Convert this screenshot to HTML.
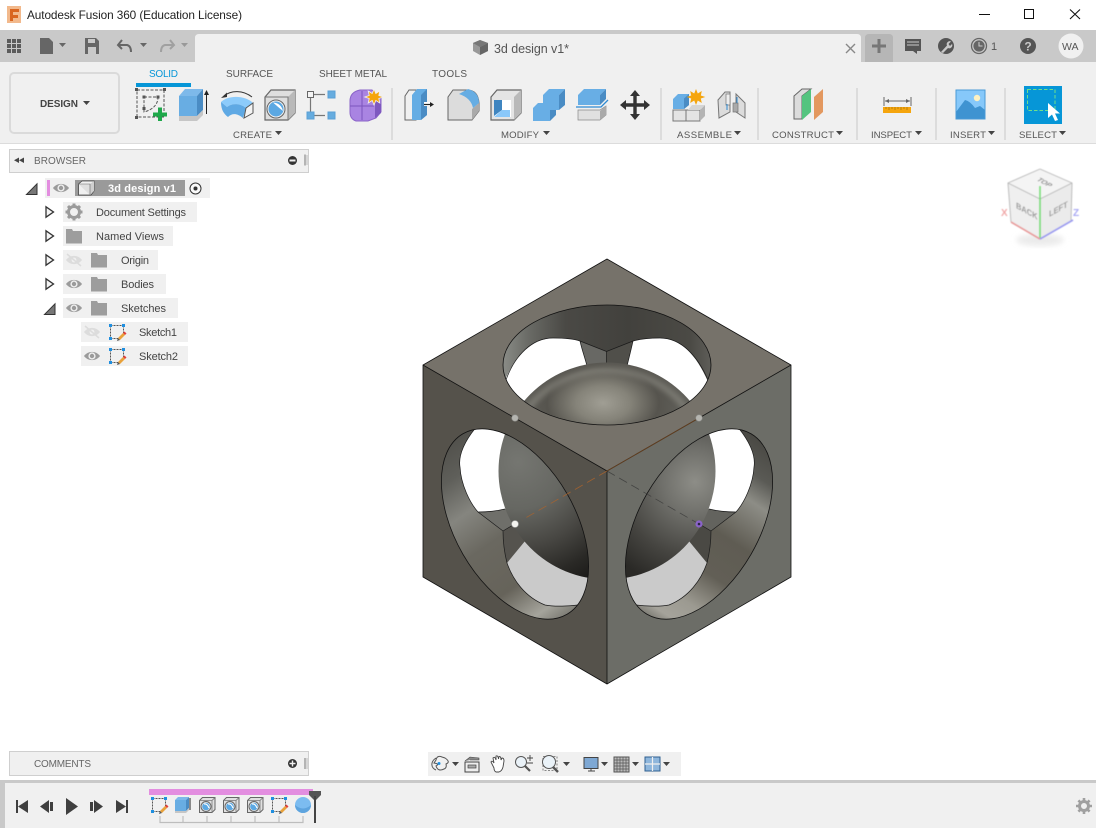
<!DOCTYPE html>
<html><head><meta charset="utf-8"><title>Autodesk Fusion 360</title>
<style>
html,body{margin:0;padding:0;background:#fff;width:1096px;height:828px;overflow:hidden}
svg{display:block;position:absolute;left:0;top:0}
text{font-family:"Liberation Sans",Arial,sans-serif;fill:#555;font-size:10px}
.r{font-size:11px;fill:#444}
.ne{vector-effect:non-scaling-stroke}
</style></head><body>
<svg width="1096" height="828" viewBox="0 0 1096 828" xmlns="http://www.w3.org/2000/svg">
<defs>
<path id="caret" d="M0,0h7l-3.500,4z"/>
<g id="eye"><path d="M-8,0C-4,-5.500 4,-5.500 8,0C4,5.500 -4,5.500 -8,0Z" fill="#9b9b9b"/><circle r="3.600" fill="#f0f0f0"/><circle r="2.200" fill="#9b9b9b"/></g>
<g id="eyeoff"><path d="M-8,0C-4,-5.500 4,-5.500 8,0C4,5.500 -4,5.500 -8,0Z" fill="#dcdcdc"/><circle r="2.400" fill="#f0f0f0"/><path d="M-7,-6L7,6" stroke="#dcdcdc" stroke-width="1.500"/></g>
<path id="folder" d="M0,0h6l1,2h9v12.500h-16z" fill="#9d9d9d"/>
<path id="tri" d="M1,0.800L8.500,6L1,11.200Z" fill="#f4f4f4" stroke="#333" stroke-width="1.300"/>
<g id="open"><path d="M0.500,11.500H11V0.800Z" fill="#777" stroke="#333" stroke-width="1"/></g>
<g id="sk"><path d="M1.500,1.500H14.500M1.500,1.500V14.500M1.500,14.500H9M14.500,1.500V9" fill="none" stroke="#555" stroke-width="1" stroke-dasharray="2 1"/><rect width="3" height="3" fill="#1f8fe0"/><rect x="13" width="3" height="3" fill="#1f8fe0"/><rect y="13" width="3" height="3" fill="#1f8fe0"/><path d="M9,14L14,9L16,11L11,16Z" fill="#e9a23b"/><path d="M14,9L15.500,7.500L17.500,9.500L16,11Z" fill="#e2403a"/><path d="M9,14L8,17L11,16Z" fill="#555"/></g>
<g id="holemini"><path d="M0.500,3.500L3.500,0.500H16L16,12.500L13,15.500H0.500Z" fill="#e0e0e0" stroke="#666"/><path d="M13,3.500H.5M13,3.500V15.500M13,3.500L16,.5" fill="none" stroke="#777" stroke-width=".8"/><circle cx="7" cy="9.500" r="5" fill="#e8e8e8" stroke="#666"/><circle cx="7" cy="9.500" r="3.800" fill="#5ba8e3"/><path d="M5,7C7,6.500 9,8 10,11" stroke="#fff" stroke-width="1.200" fill="none"/></g>

<clipPath id="cT"><ellipse cx="607" cy="365" rx="104" ry="60"/></clipPath>
<clipPath id="cL"><circle r=".8" transform="matrix(92,53,0,106.500,515,524)"/></clipPath>
<clipPath id="cR"><circle r=".8" transform="matrix(92,-53,0,106.500,699,524)"/></clipPath>
<clipPath id="cS"><circle cx="607" cy="471" r="108.500"/></clipPath>
<mask id="mT" maskUnits="userSpaceOnUse" x="400" y="240" width="420" height="460"><rect x="400" y="240" width="420" height="460" fill="#fff"/><ellipse cx="607" cy="365" rx="104" ry="60" fill="#000"/></mask>
<mask id="mL" maskUnits="userSpaceOnUse" x="400" y="240" width="420" height="460"><rect x="400" y="240" width="420" height="460" fill="#fff"/><circle r=".8" transform="matrix(92,53,0,106.500,515,524)" fill="#000"/></mask>
<mask id="mR" maskUnits="userSpaceOnUse" x="400" y="240" width="420" height="460"><rect x="400" y="240" width="420" height="460" fill="#fff"/><circle r=".8" transform="matrix(92,-53,0,106.500,699,524)" fill="#000"/></mask>
<linearGradient id="wT" gradientUnits="userSpaceOnUse" x1="503" y1="0" x2="711" y2="0"><stop offset="0" stop-color="#8a8c87"/><stop offset=".12" stop-color="#6a6b66"/><stop offset=".3" stop-color="#4a4945"/><stop offset=".6" stop-color="#42413d"/><stop offset=".9" stop-color="#4b4a45"/><stop offset="1" stop-color="#5e5d58"/></linearGradient>
<linearGradient id="wL" gradientUnits="userSpaceOnUse" x1="442" y1="440" x2="570" y2="625"><stop offset="0" stop-color="#4f4e49"/><stop offset=".17" stop-color="#5f5f5a"/><stop offset=".33" stop-color="#85857f"/><stop offset=".5" stop-color="#6a6860"/><stop offset=".72" stop-color="#66635a"/><stop offset=".88" stop-color="#a5a49c"/><stop offset="1" stop-color="#66655e"/></linearGradient>
<linearGradient id="wR" gradientUnits="userSpaceOnUse" x1="770" y1="440" x2="650" y2="625"><stop offset="0" stop-color="#474641"/><stop offset=".17" stop-color="#5a5a55"/><stop offset=".28" stop-color="#8d8d86"/><stop offset=".48" stop-color="#5f5c53"/><stop offset=".66" stop-color="#625f56"/><stop offset=".82" stop-color="#9c9a91"/><stop offset=".92" stop-color="#a5a39b"/><stop offset="1" stop-color="#66655e"/></linearGradient>
<radialGradient id="sT" gradientUnits="userSpaceOnUse" cx="603" cy="403" r="62" gradientTransform="matrix(1.250 0 0 .8 -150.700 80.600)"><stop offset="0" stop-color="#a09e94"/><stop offset=".35" stop-color="#858379"/><stop offset=".72" stop-color="#56544e"/><stop offset="1" stop-color="#5f5e58"/></radialGradient>
<radialGradient id="sL" gradientUnits="userSpaceOnUse" cx="518" cy="462" r="135"><stop offset="0" stop-color="#757671"/><stop offset=".35" stop-color="#666762"/><stop offset=".62" stop-color="#484743"/><stop offset=".85" stop-color="#2a2926"/><stop offset="1" stop-color="#1c1b19"/></radialGradient>
<radialGradient id="sR" gradientUnits="userSpaceOnUse" cx="695" cy="482" r="108"><stop offset="0" stop-color="#8d8d87"/><stop offset=".3" stop-color="#70706b"/><stop offset=".7" stop-color="#454440"/><stop offset="1" stop-color="#2a2926"/></radialGradient>
<filter id="bl" x="-20%" y="-20%" width="140%" height="140%"><feGaussianBlur stdDeviation="3"/></filter>
<filter id="b4" x="-10%" y="-10%" width="120%" height="120%"><feGaussianBlur stdDeviation=".5"/></filter>
</defs>

<rect width="1096" height="828" fill="#fff"/>

<!-- title bar -->
<rect x="7" y="6" width="14" height="17" fill="#f2b98c"/><path d="M10,9h9v3h-6v3h5v3h-5v3h-3z" fill="#d9651f"/>
<text x="27" y="19" style="font-size:11.800px;fill:#222" textLength="215">Autodesk Fusion 360 (Education License)</text>
<path d="M979,14.500H990" stroke="#111"/><rect x="1024.500" y="9.500" width="9" height="9" fill="none" stroke="#111"/><path d="M1070,9.500L1080,19M1080,9.500L1070,19" stroke="#111" stroke-width="1.100"/>

<!-- top gray bar -->
<rect y="30" width="1096" height="32" fill="#c9c9c9"/>
<rect y="62" width="1096" height="81" fill="#f0f0f0"/>
<rect y="143" width="1096" height="1" fill="#dcdcdc"/>
<path d="M195,62V38q0,-4 4,-4H857q4,0 4,4V62Z" fill="#f0f0f0"/>
<path d="M865,62V38q0,-4 4,-4H889q4,0 4,4V62Z" fill="#b6b6b6"/>
<path d="M879,39v14M872,46h14" stroke="#777" stroke-width="3"/>
<g fill="#5c5c5c"><rect x="7" y="39" width="4" height="4"/><rect x="12" y="39" width="4" height="4"/><rect x="17" y="39" width="4" height="4"/><rect x="7" y="44" width="4" height="4"/><rect x="12" y="44" width="4" height="4"/><rect x="17" y="44" width="4" height="4"/><rect x="7" y="49" width="4" height="4"/><rect x="12" y="49" width="4" height="4"/><rect x="17" y="49" width="4" height="4"/></g>
<path d="M40,38h9l4,4v12h-13z" fill="#666"/><use href="#caret" x="59" y="43" fill="#666"/>
<path d="M85,38h11l3,3v13h-14z" fill="#666"/><rect x="88" y="39" width="7" height="4" fill="#c9c9c9"/><rect x="88" y="47" width="8" height="7" fill="#c9c9c9"/>
<path d="M122,40L118,45L122,49M118,45H127Q131,46 131,52" fill="none" stroke="#666" stroke-width="2"/><use href="#caret" x="140" y="43" fill="#666"/>
<path d="M170,40L174,45L170,49M174,45H165Q161,46 161,52" fill="none" stroke="#a0a0a0" stroke-width="2"/><use href="#caret" x="181" y="43" fill="#999"/>
<path d="M473,43L480,40L488,43V51L480,55L473,51Z" fill="#999"/><path d="M480,47L488,43V51L480,55Z" fill="#666"/><path d="M473,43L480,40L488,43L480,47Z" fill="#777"/>
<text x="494" y="53" style="font-size:12.500px;fill:#555" textLength="75">3d design v1*</text>
<path d="M846,44L855,53M855,44L846,53" stroke="#888" stroke-width="1.400"/>
<path d="M905,39h16v12h-4v3l-4,-3h-8z" fill="#555"/><path d="M907,42h12M907,45h12" stroke="#c9c9c9"/>
<circle cx="946" cy="46" r="8" fill="#555"/><path d="M941,52L947,45.500A3,3 0 0 1 951,41.500L948.500,44L950,46L952,44A3,3 0 0 1 948,48L943,53Z" fill="#c9c9c9"/>
<circle cx="979" cy="46" r="7.500" fill="none" stroke="#666" stroke-width="1.300"/><circle cx="979" cy="46" r="5.600" fill="#666"/><path d="M979,42v4h3.500" fill="none" stroke="#ccc" stroke-width="1"/>
<text x="991" y="50" style="font-size:11px;fill:#555">1</text>
<circle cx="1028" cy="46" r="8" fill="#555"/><text x="1024.400" y="50.500" style="font-size:12px;font-weight:bold;fill:#c9c9c9">?</text>
<circle cx="1071" cy="46" r="12.500" fill="#f0f0f0"/><text x="1062" y="50" style="font-size:10.500px;fill:#555">WA</text>

<!-- design button -->
<rect x="10" y="73" width="109" height="60" rx="4" fill="#f0f0f0" stroke="#dadada" stroke-width="2"/>
<text x="40" y="107" style="font-weight:bold;font-size:10px;fill:#444" textLength="38">DESIGN</text>
<use href="#caret" x="83" y="101" fill="#444"/>

<!-- ribbon tabs -->
<text x="149" y="77" style="fill:#0696d7" textLength="29">SOLID</text>
<text x="226" y="77" textLength="47">SURFACE</text>
<text x="319" y="77" textLength="68">SHEET METAL</text>
<text x="432" y="77" textLength="35">TOOLS</text>
<rect x="136" y="83" width="55" height="4" fill="#0696d7"/>

<g fill="#dcdcdc"><rect x="391" y="88" width="2" height="52"/><rect x="660" y="88" width="2" height="52"/><rect x="757" y="88" width="2" height="52"/><rect x="856" y="88" width="2" height="52"/><rect x="935" y="88" width="2" height="52"/><rect x="1004" y="88" width="2" height="52"/></g>

<!-- labels -->
<g style="font-size:9.600px">
<text x="233" y="138" style="font-size:9.600px" textLength="39">CREATE</text><use href="#caret" x="275" y="131" fill="#444"/>
<text x="501" y="138" style="font-size:9.600px" textLength="38">MODIFY</text><use href="#caret" x="543" y="131" fill="#444"/>
<text x="677" y="138" style="font-size:9.600px" textLength="55">ASSEMBLE</text><use href="#caret" x="734" y="131" fill="#444"/>
<text x="772" y="138" style="font-size:9.600px" textLength="62">CONSTRUCT</text><use href="#caret" x="836" y="131" fill="#444"/>
<text x="871" y="138" style="font-size:9.600px" textLength="41">INSPECT</text><use href="#caret" x="915" y="131" fill="#444"/>
<text x="950" y="138" style="font-size:9.600px" textLength="36">INSERT</text><use href="#caret" x="988" y="131" fill="#444"/>
<text x="1019" y="138" style="font-size:9.600px" textLength="38">SELECT</text><use href="#caret" x="1059" y="131" fill="#444"/>
</g>

<!-- CREATE icons -->
<g>
<path d="M137,90H164V117H137Z" fill="none" stroke="#555" stroke-dasharray="3 1.500"/>
<path d="M144,97H158Q158,108 144,112Z" fill="none" stroke="#555" stroke-dasharray="3 1.500"/>
<g fill="#555"><rect x="135" y="88" width="3" height="3"/><rect x="163" y="88" width="3" height="3"/><rect x="135" y="116" width="3" height="3"/><rect x="142.500" y="95.500" width="3" height="3"/><rect x="156.500" y="95.500" width="3" height="3"/><rect x="142.500" y="107" width="3" height="3"/></g>
<path d="M160,107.500v13.500M153,114.500h14" stroke="#1ea84a" stroke-width="4"/>

<path d="M179,96L185,89H203L197,96Z" fill="#7db9ea"/><rect x="179" y="96" width="18" height="20" fill="#68ade3"/><path d="M197,96L203,89V110L197,116Z" fill="#4a8cc4"/>
<path d="M179,116H197L203,110V115L197,121H179Z" fill="#c6c6c6"/>
<path d="M206.500,114V93" stroke="#222" stroke-width="1"/><path d="M204,95L206.500,90L209,95Z" fill="#222"/>

<path d="M221,102C228,95 245,95 253,103L246,108C240,103 232,103 227,107Z" fill="#8ccbfb"/>
<path d="M221,102L227,107C232,103 240,103 246,108L243,118C237,113 232,113 228,117C224,114 221,110 221,102Z" fill="#5fa9e4"/>
<path d="M246,108L253,103V113L244,118Z" fill="#f4f4f4" stroke="#555"/>
<path d="M224,96C231,90 243,90 252,97" fill="none" stroke="#333" stroke-width="1"/><path d="M221,98L227,92.500V97Z" fill="#333"/>

<path d="M265,97L271,90H295V113L288,120H265Z" fill="#dedede" stroke="#666" stroke-width="1.200"/><path d="M288,97L295,90V113L288,120Z" fill="#b9b9b9"/><path d="M265,97H288V120" fill="none" stroke="#777"/>
<circle cx="276" cy="109" r="9" fill="#eee" stroke="#666"/><circle cx="276" cy="109" r="7.500" fill="#5ba8e3"/><path d="M273,102.500Q281,103 283,111Q278,107 273,102.500Z" fill="#fff"/>

<path d="M313,94.500H325M313,115.500H325M310.500,98V112" stroke="#777" stroke-width="1.200"/>
<rect x="307.500" y="91.500" width="6" height="6" fill="#f4f4f4" stroke="#666"/>
<rect x="328" y="91" width="7" height="7" fill="#66acdf" stroke="#5a9fd6"/><rect x="307" y="112" width="7" height="7" fill="#66acdf" stroke="#5a9fd6"/><rect x="328" y="112" width="7" height="7" fill="#66acdf" stroke="#5a9fd6"/>

<path d="M350,101Q350,92 360,90H372L381,98V112L376,118L368,121H356Q350,119 350,112Z" fill="#a984e2" stroke="#8a63c8"/>
<path d="M350,106H374M362,91V120" stroke="#7c55bd" stroke-width="1"/><path d="M375,100L381,103V113L375,118Z" fill="#7e58bf"/>
<path d="M374,89l1.800,4.500 4,-2.500-1,4.500 4.500,1.500-4.500,1.500 1,4.500-4,-2.500-1.800,4.500-1.800,-4.500-4,2.500 1,-4.500-4.500,-1.500 4.500,-1.500-1,-4.500 4,2.500z" fill="#f5a50d" stroke="#f0f0f0" stroke-width=".8"/>
</g>

<!-- MODIFY icons -->
<g>
<path d="M405,120V96L409,90H416V120Z" fill="#f0f0f0" stroke="#666"/>
<path d="M412,95L417,89H427V115L421,120H412Z" fill="#65ade4"/><path d="M421,95L427,89V115L421,120Z" fill="#4a8cc4"/>
<path d="M424,102h7v4h-7z" fill="#fff"/><path d="M424,104.500H431" stroke="#222" stroke-width="1.200"/><path d="M430,102L434,104.500L430,107Z" fill="#222"/>

<path d="M448,97L453,90H467Q478,90 479,103V111L472,120H448Z" fill="#dcdcdc" stroke="#666"/>
<path d="M472,120V109L479,103V111Z" fill="#aaa"/>
<path d="M459,94L468,89Q479,92 479,103L473,108Q471,98 459,94Z" fill="#66ade3"/>

<path d="M491,97L497,90H521V113L514,120H491Z" fill="#e4e4e4" stroke="#666" stroke-width="1.200"/><path d="M514,97L521,90V113L514,120Z" fill="#b9b9b9"/>
<rect x="494" y="100" width="17" height="17" fill="#fff"/>
<path d="M494,100h8v10l-8,6Z" fill="#3f85c0"/><path d="M494,117L502,110H510V117Z" fill="#8ac8fa"/>

<path d="M533,108L538,103H545V108Z" fill="#68aee5"/><rect x="533" y="108" width="17" height="13" fill="#68aee5"/><path d="M550,110H556V115L550,121Z" fill="#4a8cc4"/>
<path d="M543,95L549,89H565L559,95Z" fill="#68aee5"/><rect x="543" y="95" width="16" height="15" fill="#68aee5"/><path d="M559,95L565,89V105L559,110Z" fill="#4a8cc4"/>

<path d="M578,95L584,89H606L600,95Z" fill="#68aee5"/><rect x="578" y="95" width="22" height="10" fill="#68aee5"/><path d="M600,95L606,89V99L600,105Z" fill="#4a8cc4"/>
<path d="M576,107H601L608,100" fill="none" stroke="#2d8ad2" stroke-width="1.300"/>
<path d="M578,110H600L606,106V115L600,120H578Z" fill="#e0e0e0" stroke="#888" stroke-width=".7"/><path d="M600,111L606,106V115L600,120Z" fill="#aaa"/>

<path d="M635,90l-5,6h3.300v7.300H626V100l-6,5 6,5v-3.300h7.300v7.300H630l5,6 5,-6h-3.300v-7.300H644v3.300l6,-5-6,-5v3.300h-7.300V96H640z" fill="#333"/>
</g>

<!-- ASSEMBLE -->
<g>
<path d="M673,110H686V121H673Z" fill="#e4e4e4" stroke="#777"/><path d="M686,110H700V121H686Z" fill="#e4e4e4" stroke="#777"/><path d="M700,110L705,105V116L700,121Z" fill="#b4b4b4"/><path d="M688,110L692,105H705L700,110Z" fill="#d5d5d5"/>
<path d="M673,99L678,94H689L689,105L684,109H673Z" fill="#68aee5"/><path d="M684,98.500L689,94V105L684,109Z" fill="#4a8cc4"/>
<path d="M696,89l1.800,4.500 4,-2.500-1,4.500 4.500,1.500-4.500,1.500 1,4.500-4,-2.500-1.800,4.500-1.800,-4.500-4,2.500 1,-4.500-4.500,-1.500 4.500,-1.500-1,-4.500 4,2.500z" fill="#f5a50d"/>
<path d="M718,100L725,92L730,92V112L719,118Z" fill="#dcdcdc" stroke="#777"/><path d="M726,94h4v11h-4z" fill="#eee" stroke="#777" stroke-width=".7"/>
<path d="M736,94L745,103V118L736,112Z" fill="#dcdcdc" stroke="#777"/><path d="M733,103h5v9h-5z" fill="#aaa" stroke="#777" stroke-width=".7"/>
<path d="M727,104V110M737,97V103" stroke="#2d8ad2" stroke-width="1"/>
</g>

<!-- CONSTRUCT -->
<path d="M794,96L802,89H811L802,96V119H794Z" fill="#dcdcdc" stroke="#666"/>
<path d="M802,96L811,89V112L802,120Z" fill="#54c47f"/>
<path d="M814,97L823,89V112L814,120Z" fill="#e3985f"/>

<!-- INSPECT -->
<path d="M884,97V106M911,97V106M885,101H910" stroke="#666" stroke-width="1"/><path d="M885,101L889,99V103ZM910,101L906,99V103Z" fill="#666"/>
<rect x="883" y="107" width="28" height="6" fill="#f5a50d"/><path d="M886,107v2M889,107v3M892,107v2M895,107v3M898,107v2M901,107v3M904,107v2M907,107v3" stroke="#a36f08" stroke-width=".7"/>

<!-- INSERT -->
<rect x="956" y="90" width="29" height="29" fill="#86c8fa"/><path d="M956,112L965,100Q970,101 975,108L980,106L985,110V119H956Z" fill="#3f93d1"/><rect x="956" y="90" width="29" height="29" fill="none" stroke="#4a9ad6"/>
<circle cx="977" cy="98" r="3.200" fill="#fdf1c2"/>

<!-- SELECT -->
<rect x="1024" y="86" width="38" height="38" fill="#0696d7"/>
<rect x="1027.500" y="89.500" width="27.500" height="21" fill="none" stroke="#6fe08a" stroke-width="1" stroke-dasharray="3.500 2"/>
<path d="M1048,103V118L1052,114.500L1055,121L1058,120L1055,113.500H1060Z" fill="#fff"/>

<!-- browser -->
<rect x="9.500" y="149.500" width="299" height="23" fill="#f0f0f0" stroke="#cfcfcf"/>
<path d="M19,157.500V163L14,160.250ZM24,157.500V163L19,160.250Z" fill="#444"/>
<text x="34" y="164" textLength="52" style="fill:#666;font-size:10px">BROWSER</text>
<circle cx="292.500" cy="160.500" r="4.500" fill="#333"/><rect x="289.500" y="159.500" width="6" height="2" fill="#eee"/>
<path d="M305,154.500v11" stroke="#777"/><path d="M307,155v10" stroke="#bbb"/>

<g fill="#f0f0f0">
<rect x="45" y="178" width="165" height="20"/>
<rect x="63" y="202" width="134" height="20"/>
<rect x="63" y="226" width="110" height="20"/>
<rect x="63" y="250" width="95" height="20"/>
<rect x="63" y="274" width="103" height="20"/>
<rect x="63" y="298" width="115" height="20"/>
<rect x="81" y="322" width="107" height="20"/>
<rect x="81" y="346" width="107" height="20"/>
</g>
<use href="#open" x="26" y="183"/>
<rect x="47" y="180" width="3" height="16" fill="#e38ee0"/>
<use href="#eye" x="61" y="188"/>
<rect x="75" y="180" width="110" height="16" fill="#9a9a9a"/>
<path d="M78.500,184L82,181H94V191L91,195H78.500Z" fill="#f0f0f0" stroke="#444" stroke-width=".8"/><path d="M90,184L94,181V191L90,195Z" fill="#cfcfcf"/><path d="M78.500,184H90V195" fill="#dfdfdf" stroke="#666" stroke-width=".6"/>
<text x="108" y="192" style="fill:#fff;font-weight:bold;font-size:11px" textLength="68">3d design v1</text>
<circle cx="195.500" cy="188.500" r="5.500" fill="#fafafa" stroke="#333"/><circle cx="195.500" cy="188.500" r="2" fill="#333"/>

<use href="#tri" x="45" y="206"/>
<g transform="translate(74,212)"><circle r="5.500" fill="none" stroke="#9b9b9b" stroke-width="3"/><path d="M0,-8.500V-5M0,5V8.500M-8.500,0H-5M5,0H8.500M-6,-6L-3.500,-3.500M6,6L3.500,3.500M-6,6L-3.500,3.500M6,-6L3.500,-3.500" stroke="#9b9b9b" stroke-width="3"/></g>
<text x="96" y="216" textLength="90" class="r">Document Settings</text>

<use href="#tri" x="45" y="230"/><use href="#folder" x="66" y="229"/>
<text x="96" y="240" textLength="68" class="r">Named Views</text>

<use href="#tri" x="45" y="254"/><use href="#eyeoff" x="74" y="260"/><use href="#folder" x="91" y="253"/>
<text x="121" y="264" textLength="28" class="r">Origin</text>

<use href="#tri" x="45" y="278"/><use href="#eye" x="74" y="284"/><use href="#folder" x="91" y="277"/>
<text x="121" y="288" textLength="33" class="r">Bodies</text>

<use href="#open" x="44" y="303"/><use href="#eye" x="74" y="308"/><use href="#folder" x="91" y="301"/>
<text x="121" y="312" textLength="45" class="r">Sketches</text>

<use href="#eyeoff" x="92" y="332"/><use href="#sk" x="109" y="324"/>
<text x="139" y="336" textLength="38" class="r">Sketch1</text>
<use href="#eye" x="92" y="356"/><use href="#sk" x="109" y="348"/>
<text x="139" y="360" textLength="39" class="r">Sketch2</text>

<!-- MODEL -->
<g>
<g clip-path="url(#cT)">
<rect x="500" y="300" width="215" height="130" fill="url(#wT)"/>
<path d="M580,341L606.500,351.500V370H585Z" fill="#686864"/>
<path d="M633,341L606.500,351.500V370H628Z" fill="#504f4a"/>
<path d="M500,392C512,358 532,338 553,338C565,338 574,339 580,341C582,350 585,358 587,366H627C629,358 631,350 633,341C640,339 648,338 660,338C682,338 700,358 712,392V430H500Z" fill="#fff"/>
<path d="M506,380C515,355 532,338 553,338C565,338 574,339 580,341L606.500,351.500L633,341C640,339 648,338 660,338C682,338 698,357 708,380M580,341C582,350 585,358 587,366M633,341C631,350 629,358 627,366M606.500,351.500V366" fill="none" stroke="#1a1a1a" stroke-width=".7"/>
<circle cx="607" cy="471" r="108.500" fill="url(#sT)"/>
<g clip-path="url(#cS)"><circle cx="607" cy="471" r="101" fill="none" stroke="#a3a299" stroke-width="5" opacity=".55" filter="url(#bl)"/></g>
</g>
<g clip-path="url(#cL)">
<rect x="436" y="425" width="158" height="200" fill="url(#wL)"/>
<path d="M478,512C488,512 497,511 505,509L525,520L503,531Z" fill="#6f6f6a"/>
<path d="M503,531C503,545 505,555 507,563L530,540L515,524Z" fill="#55534e"/>
<path d="M478,425C465,440 458,455 460,467C461,485 470,503 478,512C488,512 497,511 505,509L560,480L520,425Z" fill="#fff"/>
<path d="M507,563C513,580 525,597 545,605C555,607 570,606 578,605L600,570L530,535Z" fill="#cacaca"/>
<path d="M478,512L503,531L518,522M503,531C503,545 505,555 507,563C513,580 525,597 545,605C555,607 570,606 578,605M478,425C465,440 458,455 460,467C461,485 470,503 478,512C488,512 497,511 505,509" fill="none" stroke="#1a1a1a" stroke-width=".7"/>
<circle cx="607" cy="471" r="108.500" fill="url(#sL)"/>
</g>
<g clip-path="url(#cR)">
<rect x="620" y="425" width="158" height="200" fill="url(#wR)"/>
<g transform="matrix(-1,0,0,1,1214,0)">
<path d="M478,512C488,512 497,511 505,509L525,520L503,531Z" fill="#63635e"/>
<path d="M503,531C503,545 505,555 507,563L530,540L515,524Z" fill="#4a4944"/>
<path d="M478,425C465,440 458,455 460,467C461,485 470,503 478,512C488,512 497,511 505,509L560,480L520,425Z" fill="#fff"/>
<path d="M507,563C513,580 525,597 545,605C555,607 570,606 578,605L600,570L530,535Z" fill="#cacaca"/>
<path d="M478,512L503,531L518,522M503,531C503,545 505,555 507,563C513,580 525,597 545,605C555,607 570,606 578,605M478,425C465,440 458,455 460,467C461,485 470,503 478,512C488,512 497,511 505,509" fill="none" stroke="#1a1a1a" stroke-width=".7"/>
</g>
<circle cx="607" cy="471" r="108.500" fill="url(#sR)"/>
</g>
<path d="M607,259L791,365L607,471L423,365Z" fill="#76726a" mask="url(#mT)"/>
<path d="M423,365L607,471V684L423,577Z" fill="#55524b" mask="url(#mL)"/>
<path d="M791,365L607,471V684L791,577Z" fill="#6c6d67" mask="url(#mR)"/>
<ellipse cx="607" cy="365" rx="104" ry="60" fill="none" stroke="#111" stroke-width=".8"/>
<circle r=".8" transform="matrix(92,53,0,106.500,515,524)" fill="none" stroke="#111" stroke-width=".8" class="ne"/>
<circle r=".8" transform="matrix(92,-53,0,106.500,699,524)" fill="none" stroke="#111" stroke-width=".8" class="ne"/>
<path d="M607,259L791,365V577L607,684L423,577V365ZM423,365L607,471L791,365M607,471V684" fill="none" stroke="#111" stroke-width=".8"/>
<path d="M699,418L607,471" stroke="#7a4a20" stroke-width=".8" opacity=".8"/>
<path d="M607,471L522,520" stroke="#b0642a" stroke-width=".8" stroke-dasharray="9 5" opacity=".8"/>
<path d="M607,471L699,524" stroke="#333" stroke-width=".8" stroke-dasharray="9 5" opacity=".7"/>
<circle cx="515" cy="418" r="3.300" fill="#b5b5b0" stroke="#8a8a86" stroke-width=".6"/>
<circle cx="699" cy="418" r="3.300" fill="#b5b5b0" stroke="#8a8a86" stroke-width=".6"/>
<circle cx="515" cy="524" r="3.500" fill="#f4f4f0" stroke="#999" stroke-width=".6"/>
<circle cx="699" cy="524" r="3.600" fill="#8a63c8"/>
<circle cx="699" cy="524" r="1.300" fill="#2a2340"/>
</g>

<!-- viewcube -->
<g filter="url(#b4)">
<ellipse cx="1040" cy="240" rx="24" ry="6" fill="#ddd" opacity=".6" filter="url(#bl)"/>
<path d="M1040,169L1072,183L1071,221L1040,239L1011,222L1008,183Z" fill="#efefef"/>
<path d="M1040,169L1072,183L1040,199L1008,183Z" fill="#f4f4f4"/>
<path d="M1072,183L1040,199L1040,239L1071,221Z" fill="#ebebeb"/>
<path d="M1040,169L1072,183L1071,221M1040,169L1008,183L1011,222M1008,183L1040,199L1072,183" fill="none" stroke="#b5b5b5" stroke-width=".9"/>
<text transform="matrix(.88,.48,0,1,1016,208)" style="font-size:8.500px;fill:#999;font-weight:bold">BACK</text>
<text transform="matrix(.88,-.48,0,1,1049,217)" style="font-size:8.500px;fill:#999;font-weight:bold">LEFT</text>
<text transform="matrix(.8,.45,-.8,.45,1036,180)" style="font-size:8px;fill:#888;font-weight:bold">TOP</text>
<path d="M1040,239L1040,186" stroke="#6cdc6c" stroke-width="1.600"/>
<path d="M1040,239L1011,222" stroke="#e89a9a" stroke-width="1.600"/>
<path d="M1040,239L1073,220" stroke="#9a9af0" stroke-width="1.600"/>
<text x="1001" y="216" style="font-size:10px;font-weight:bold;fill:#f0a8a8">X</text>
<text x="1073" y="216" style="font-size:10px;font-weight:bold;fill:#a8a8f4">Z</text>
</g>

<!-- comments -->
<rect x="9.500" y="751.500" width="299" height="24" fill="#f0f0f0" stroke="#cfcfcf"/>
<text x="34" y="767" textLength="57" style="fill:#666;font-size:10px">COMMENTS</text>
<circle cx="292.500" cy="763.500" r="4.500" fill="#333"/><path d="M289.500,763.500h6M292.500,760.500v6" stroke="#eee" stroke-width="1.400"/>
<path d="M305,758v11" stroke="#777"/><path d="M307,758v11" stroke="#bbb"/>

<!-- nav bar -->
<rect x="428" y="752" width="253" height="24" fill="#f0f0f0"/>
<g fill="none" stroke="#555" stroke-width="1">
<path d="M436,758C430,762 431,768 436,770M442,757Q437,755 436,760L434,763Q440,764 436,766Q438,772 444,769Q447,768 446,764Q451,762 445,758Z"/>
<circle cx="439" cy="763.500" r="1" fill="#1f8fe0" stroke="#1f8fe0"/>
</g>
<use href="#caret" x="452" y="762" fill="#444"/>
<rect x="465" y="762" width="14" height="10" fill="#eee" stroke="#444"/><rect x="468" y="765" width="8" height="3" fill="#aaa" stroke="#444" stroke-width=".7"/><path d="M465,761L470,757L479,758V760H470" fill="#888" stroke="#444" stroke-width=".6"/>
<path d="M494,768L491,762Q492,760 494,763L493,758Q495,756 496,760L496,756Q498,755 498.500,759L499,756.500Q501,756 501,760L502,758Q504,758 504,761L503,767Q502,771 499,772H496Q494,771 494,768Z" fill="#fff" stroke="#444" stroke-width=".9"/>
<circle cx="521" cy="762" r="5.500" fill="#eaf2f8" stroke="#555"/><path d="M525,766L530,771" stroke="#555" stroke-width="2.200"/>
<path d="M527,758h6M530,755v6M527,763h6" stroke="#444" stroke-width=".9" fill="none"/>
<rect x="543" y="756.500" width="14" height="14" fill="none" stroke="#666" stroke-width=".8" stroke-dasharray="2 1.500"/>
<circle cx="549" cy="762" r="6.500" fill="#eaf2f8" stroke="#555"/><path d="M553,767L558,772" stroke="#555" stroke-width="2.400"/>
<use href="#caret" x="563" y="762" fill="#444"/>
<rect x="584" y="757.500" width="14" height="11" fill="#7ea8d4" stroke="#444"/><path d="M588,771h7M591,769v2" stroke="#444"/>
<use href="#caret" x="601" y="762" fill="#444"/>
<rect x="614" y="757" width="15" height="15" fill="#bbb" stroke="#555"/><path d="M617,757v15M620,757v15M623,757v15M626,757v15M614,760h15M614,763h15M614,766h15M614,769h15" stroke="#555" stroke-width=".7"/>
<use href="#caret" x="632" y="762" fill="#444"/>
<rect x="645" y="757" width="15" height="14" fill="#8eb6dc" stroke="#2f5f8f"/><path d="M652.500,757v14M645,764h15" stroke="#f0f0f0" stroke-width="1.200"/>
<use href="#caret" x="663" y="762" fill="#444"/>

<!-- timeline -->
<rect y="781" width="1096" height="47" fill="#f0f0f0"/>
<rect y="780" width="1096" height="3" fill="#c9c9c9"/>
<rect y="780" width="5" height="48" fill="#c9c9c9"/>
<g fill="#3f3f3f">
<rect x="16" y="800" width="2" height="13"/><path d="M28,800V813L18,806.500Z"/>
<path d="M40,806.500L49,800V813ZM50,802h3v9h-3z"/>
<path d="M66,798V815L78,806.500Z"/>
<path d="M103,806.500L94,800V813ZM90,802h3v9h-3z"/>
<rect x="126" y="800" width="2" height="13"/><path d="M116,800V813L126,806.500Z"/>
</g>
<rect x="149" y="789" width="164" height="6" fill="#e38ee0"/>
<use href="#sk" x="151" y="797"/>
<g><path d="M175,800L178,797H189L186,800Z" fill="#7db9ea"/><rect x="175" y="800" width="11" height="11" fill="#68ade3"/><path d="M186,800L189,797V808L186,811Z" fill="#4a8cc4"/><path d="M175,811H186L189,808V810L186,813H175Z" fill="#c6c6c6"/><path d="M190,810V798" stroke="#222"/></g>
<use href="#holemini" x="199" y="797"/>
<use href="#holemini" x="223" y="797"/>
<use href="#holemini" x="247" y="797"/>
<use href="#sk" x="271" y="797"/>
<circle cx="303" cy="805" r="8" fill="#7cbcf0"/><path d="M295,805A8,8 0 0 0 311,805Q303,812 295,805Z" fill="#5ea4de"/>
<path d="M160,816V822.500H303V816M183,816V822.500M207,816V822.500M231,816V822.500M255,816V822.500M279,816V822.500" fill="none" stroke="#bdbdbd" stroke-width="1.200"/>
<path d="M309,791H321V795L316,800H314L309,795Z" fill="#555"/><rect x="314" y="796" width="2" height="27" fill="#444"/>
<g transform="translate(1084,806)"><circle r="4.500" fill="none" stroke="#a0a0a0" stroke-width="3"/><path d="M0,-8V-5M0,5V8M-8,0H-5M5,0H8M-5.600,-5.600L-3.500,-3.500M5.600,5.600L3.500,3.500M-5.600,5.600L-3.500,3.500M5.600,-5.600L3.500,-3.500" stroke="#a0a0a0" stroke-width="2.600"/></g>
</svg>
</body></html>
